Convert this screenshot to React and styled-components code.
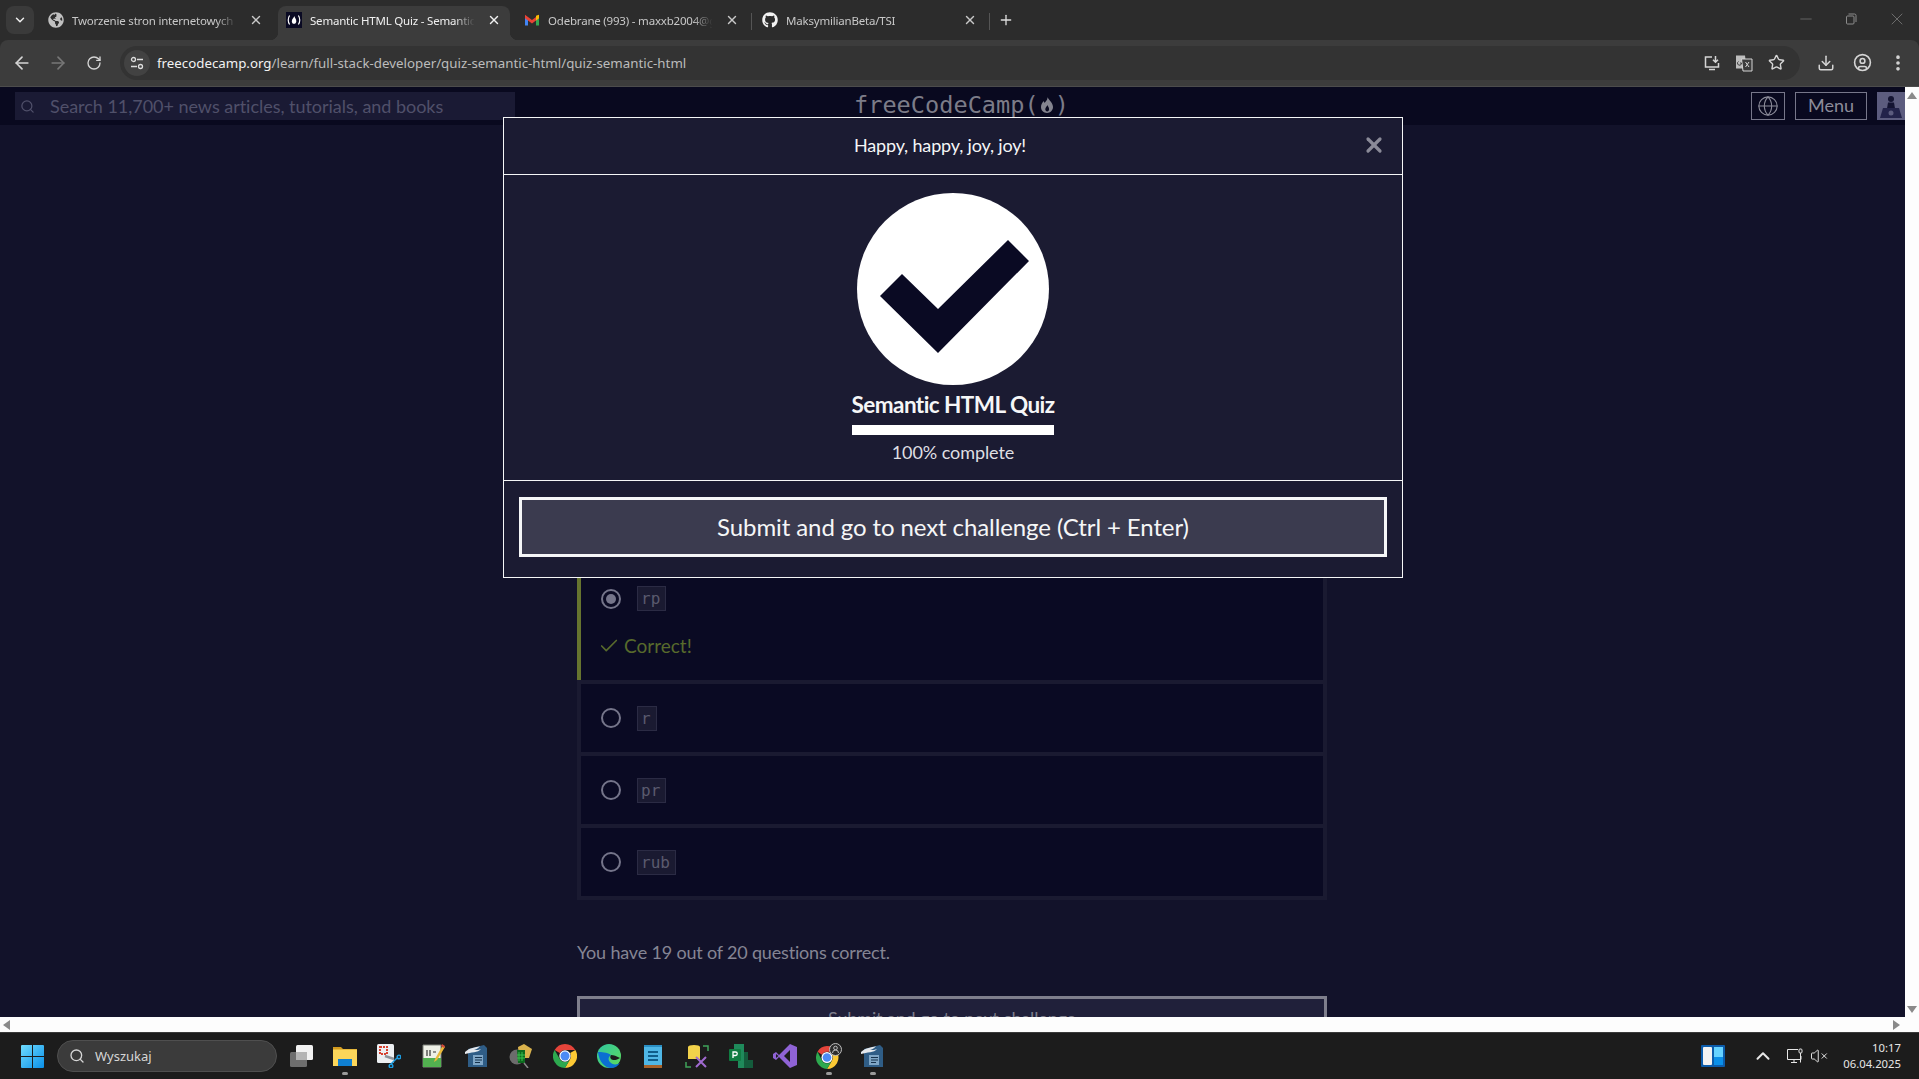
import React from "react";
import styled, { createGlobalStyle } from "styled-components";
import { ArrowLeft, ArrowRight, RotateCw, ChevronDown, X, Plus, Minus, Star, Download, MoreVertical, Search, Globe, Check, ChevronUp, VolumeX, CircleUser } from "lucide-react";
import { FaGithub, FaGlobeAmericas } from "react-icons/fa";

const GlobalStyle = createGlobalStyle`
	html, body {
		margin: 0;
		height: 100%;
		overflow: hidden;
		background: #2c2c2c;
	}
	* { box-sizing: border-box; }
`;

const chromeFont = `"Noto Sans", "Open Sans", sans-serif`;
const pageFont = `Lato, "Open Sans", sans-serif`;
const monoFont = `"DejaVu Sans Mono", "Liberation Mono", monospace`;

const Screen = styled.div`
	height: 100vh;
	display: flex;
	flex-direction: column;
	background: #2c2c2c;
	font-family: ${chromeFont};
`;

/* browser tabs */
const TabStrip = styled.div`
	height: 40px;
	flex: none;
	display: flex;
	align-items: flex-end;
	padding-left: 6px;
	gap: 6px;
	color: #d8d8d8;
`;

const TabMenu = styled.div`
	width: 28px;
	height: 28px;
	align-self: flex-start;
	margin-top: 6px;
	border-radius: 8px;
	background: #3a3a3a;
	display: flex;
	align-items: center;
	justify-content: center;
	color: #eee;
`;

const Tab = styled.div`
	position: relative;
	width: 232px;
	height: 34px;
	padding: 0 8px 6px;
	display: flex;
	align-items: center;
	gap: 8px;
	font-size: 11.5px;
	letter-spacing: -0.2px;
	border-radius: 8px 8px 0 0;
	background: ${(p) => (p.$active ? "#3c3c3c" : "transparent")};
	color: ${(p) => (p.$active ? "#f0f0f0" : "#c8c8c8")};

	&::after {
		content: "";
		display: ${(p) => (p.$sep ? "block" : "none")};
		position: absolute;
		right: -4px;
		top: 7px;
		width: 1px;
		height: 17px;
		background: #555;
	}
`;

const Flare = styled.span`
	position: absolute;
	bottom: 0;
	width: 8px;
	height: 8px;
	${(p) => (p.$side === "left" ? "left: -8px;" : "right: -8px;")}
	background: radial-gradient(circle at ${(p) => (p.$side === "left" ? "0 0" : "100% 0")}, transparent 8px, #3c3c3c 8.5px);
`;

const TabTitle = styled.span`
	flex: 1;
	min-width: 0;
	white-space: nowrap;
	overflow: hidden;
	-webkit-mask-image: linear-gradient(to right, #000 86%, transparent 98%);
	mask-image: linear-gradient(to right, #000 86%, transparent 98%);
`;

const TabClose = styled.span`
	width: 16px;
	height: 16px;
	flex: none;
	display: flex;
	align-items: center;
	justify-content: center;
`;

const NewTab = styled.div`
	width: 16px;
	height: 34px;
	padding-bottom: 6px;
	margin-left: 6px;
	display: flex;
	align-items: center;
	justify-content: center;
	color: #ddd;
`;

const WindowControls = styled.div`
	margin-left: auto;
	align-self: flex-start;
	height: 38px;
	padding-right: 12px;
	display: flex;
	align-items: center;
	gap: 30px;
	color: #8c8c8c;
`;

/* address bar */
const Toolbar = styled.div`
	height: 47px;
	flex: none;
	display: flex;
	align-items: center;
	padding: 0 3px 1px 4px;
	background: #3c3c3c;
	border-radius: 8px 8px 0 0;
	border-bottom: 1px solid #4c4c4c;
`;

const ToolButton = styled.div`
	width: ${(p) => p.$size || 36}px;
	height: 34px;
	flex: none;
	display: flex;
	align-items: center;
	justify-content: center;
	color: ${(p) => (p.$dim ? "#777" : "#d5d5d5")};
`;

const AddressPill = styled.div`
	flex: 1;
	height: 34px;
	margin: 0 8px;
	padding: 0 8px 0 4px;
	border-radius: 17px;
	background: #333;
	display: flex;
	align-items: center;
`;

const SiteInfo = styled.div`
	width: 26px;
	height: 26px;
	border-radius: 50%;
	background: #424242;
	display: flex;
	align-items: center;
	justify-content: center;
	color: #ddd;
`;

const Url = styled.div`
	flex: 1;
	margin-left: 7px;
	font-size: 13.3px;
	color: #bcbcbc;
	white-space: nowrap;
	span {
		color: #f2f2f2;
	}
`;

/* page under the dialog */
const Viewport = styled.div`
	flex: 1;
	min-height: 0;
	display: flex;
`;

const PageColumn = styled.div`
	flex: 1;
	min-width: 0;
	display: flex;
	flex-direction: column;
`;

const Page = styled.div`
	position: relative;
	flex: 1;
	min-height: 0;
	overflow: hidden;
	background: #12122a;
	font-family: ${pageFont};
`;

const Nav = styled.div`
	height: 38px;
	padding-top: 5px;
	display: flex;
	align-items: flex-start;
	background: #09091f;
`;

const SearchBox = styled.div`
	width: 500px;
	height: 28px;
	margin-left: 15px;
	padding-left: 5px;
	display: flex;
	align-items: center;
	gap: 15px;
	background: #1a1a34;
	color: #50506a;
	font-size: 18px;
	letter-spacing: -0.03px;
	white-space: nowrap;
`;

const Logo = styled.div`
	margin-left: 339px;
	display: flex;
	align-items: center;
	height: 26px;
	font-family: ${monoFont};
	font-size: 23.6px;
	color: #7c7c88;
	white-space: nowrap;
`;

const LogoFlame = styled.span`
	display: flex;
	margin: 0 -1px;
`;

const NavRight = styled.div`
	margin-left: auto;
	display: flex;
	gap: 10px;
`;

const NavButton = styled.div`
	height: 28px;
	width: ${(p) => p.$width}px;
	padding-bottom: ${(p) => (p.$text ? 2 : 0)}px;
	border: 1px solid #77778a;
	display: flex;
	align-items: center;
	justify-content: center;
	color: #8c8c9a;
	font-size: 18px;
`;

const Avatar = styled.div`
	width: 28px;
	height: 28px;
	background: #5c5c7e;
`;

const Quiz = styled.div`
	padding: 438px 1px 0 0;
	display: flex;
	flex-direction: column;
	align-items: center;
`;

const Answers = styled.div`
	width: 750px;
	padding: 4px;
	display: flex;
	flex-direction: column;
	gap: 4px;
	background: #1a1a31;
`;

const Answer = styled.div`
	background: #0a0a23;
	padding: ${(p) => (p.$correct ? "19px 20px 0 20px" : "0 20px")};
	height: ${(p) => (p.$correct ? 113 : 68)}px;
	${(p) => p.$correct && "border-left: 4px solid #66742f; margin-left: -4px;"}
`;

const AnswerLine = styled.div`
	height: ${(p) => (p.$correct ? 25 : 68)}px;
	display: flex;
	align-items: center;
	gap: 16px;
`;

const Radio = styled.span`
	width: 20px;
	height: 20px;
	border-radius: 50%;
	border: 2px solid #75758a;
	display: flex;
	align-items: center;
	justify-content: center;

	&::before {
		content: "";
		display: ${(p) => (p.$on ? "block" : "none")};
		width: 10px;
		height: 10px;
		border-radius: 50%;
		background: #75758a;
	}
`;

const Code = styled.code`
	height: 25px;
	padding: 0 5px 0 3px;
	border: 1px solid #2b2b44;
	background: #1a1a31;
	color: #5a5a6e;
	font-family: ${monoFont};
	font-size: 16px;
	line-height: 23px;
`;

const Verdict = styled.div`
	margin-top: 21px;
	margin-left: -3px;
	display: flex;
	align-items: center;
	gap: 4px;
	font-size: 19px;
	line-height: 27px;
	color: #586a2c;
`;

const Score = styled.p`
	width: 750px;
	margin: 39px 0 30px;
	font-size: 18px;
	letter-spacing: -0.18px;
	line-height: 27px;
	color: #858594;
`;

const DimSubmit = styled.div`
	width: 750px;
	height: 60px;
	padding-top: 6px;
	text-align: center;
	border: 3px solid #7e7e8c;
	background: #20203a;
	color: #7e7e8c;
	font-size: 18px;
	letter-spacing: -0.15px;
	line-height: 27px;
`;

/* success dialog */
const Dialog = styled.div`
	position: absolute;
	top: 30px;
	left: calc(50% - 449.5px);
	width: 900px;
	border: 1px solid #f5f6f7;
	background: #1b1b32;
	color: #f5f6f7;
`;

const DialogHeader = styled.div`
	height: 57px;
	padding: 0 16px 2px 0;
	display: flex;
	align-items: center;
	border-bottom: 1px solid #f5f6f7;
`;

const DialogTitle = styled.div`
	flex: 1;
	text-align: center;
	font-size: 18px;
	letter-spacing: -0.16px;
`;

const DialogClose = styled.span`
	width: 24px;
	margin-left: -14px;
	display: flex;
	color: #8a8a98;
`;

const DialogBody = styled.div`
	height: 306px;
	padding-top: 18px;
	display: flex;
	flex-direction: column;
	align-items: center;
	border-bottom: 1px solid #f5f6f7;
`;

const Badge = styled.svg`
	width: 192px;
	height: 192px;
	flex: none;
`;

const Progress = styled.div`
	display: inline-flex;
	flex-direction: column;
	align-items: stretch;
	text-align: center;
`;

const QuizName = styled.div`
	margin-top: 5px;
	font-size: 22.5px;
	letter-spacing: -0.55px;
	font-weight: 700;
	line-height: 29px;
`;

const Bar = styled.div`
	height: 10px;
	margin-top: 6px;
	background: #fff;
`;

const Percent = styled.div`
	margin-top: 4px;
	font-size: 18px;
	letter-spacing: -0.07px;
	line-height: 27px;
	color: #dfdfe2;
`;

const DialogFooter = styled.div`
	padding: 16px 15px 20px;
`;

const NextButton = styled.div`
	height: 60px;
	padding-bottom: 2px;
	border: 3px solid #f5f6f7;
	background: #3b3b4f;
	display: flex;
	align-items: center;
	justify-content: center;
	font-size: 24px;
	letter-spacing: -0.1px;
`;

/* scrollbars */
const VScroll = styled.div`
	width: 14px;
	flex: none;
	background: #fdfdfd;
	display: flex;
	flex-direction: column;
	justify-content: space-between;
	align-items: center;
	padding: 5px 0 19px;
`;

const HScroll = styled.div`
	height: 15px;
	flex: none;
	background: #fdfdfd;
	display: flex;
	align-items: center;
	justify-content: space-between;
	padding: 0 5px 0 3px;
`;

const Arrow = styled.span`
	width: 0;
	height: 0;
	border-style: solid;
	border-color: transparent;
	${(p) => p.$dir === "up" && "border-width: 0 5px 7px; border-bottom-color: #8a8a8a;"}
	${(p) => p.$dir === "down" && "border-width: 7px 5px 0; border-top-color: #8a8a8a;"}
	${(p) => p.$dir === "left" && "border-width: 5px 7px 5px 0; border-right-color: #8a8a8a;"}
	${(p) => p.$dir === "right" && "border-width: 5px 0 5px 7px; border-left-color: #8a8a8a;"}
`;

/* windows taskbar */
const Taskbar = styled.div`
	height: 47px;
	flex: none;
	display: flex;
	align-items: center;
	padding: 0 18px 0 21px;
	background: #1c1c1c;
	border-top: 1px solid #3a3a3a;
`;

const TaskSearch = styled.div`
	width: 220px;
	height: 32px;
	margin: 0 2px 0 13px;
	padding-left: 11px;
	display: flex;
	align-items: center;
	gap: 10px;
	border-radius: 16px;
	border: 1px solid #4f4f4f;
	background: #3b3b3b;
	color: #d6d6d6;
	font-size: 13px;
`;

const TaskApps = styled.div`
	display: flex;
`;

const TaskApp = styled.div`
	position: relative;
	width: 44px;
	height: 46px;
	display: flex;
	align-items: center;
	justify-content: center;

	&::after {
		content: "";
		display: ${(p) => (p.$running ? "block" : "none")};
		position: absolute;
		bottom: 4px;
		left: 19px;
		width: 6px;
		height: 3px;
		border-radius: 2px;
		background: #9a9a9a;
	}
`;

const Tray = styled.div`
	margin-left: auto;
	display: flex;
	align-items: center;
	color: #e6e6e6;
`;

const TrayItem = styled.div`
	display: flex;
	margin-left: ${(p) => p.$gap}px;
`;

const Clock = styled.div`
	margin-left: 15px;
	padding-bottom: 1px;
	text-align: right;
	font-size: 11.3px;
	line-height: 16px;
	color: #e6e6e6;
`;

const Flame = ({ size = 14, color = "#84848f", hole = "#09091f" }) => (
	<svg width={size} height={size} viewBox="0 0 24 24">
		<path d="M12.5 1.500c.6 3.400-1.900 4.900-3.500 7.400-.9-.2-1.200-1.200-1.200-2.200C5.500 9 4 11.800 4 14.600 4 19.200 7.600 22.500 12 22.500s8-3.200 8-7.800c0-5-4.300-8.700-7.500-13.200z" fill={color} />
		<path d="M12.300 12c.2 1.800-2.600 3-2.600 5.600 0 1.600 1.100 2.900 2.500 2.900s2.600-1.300 2.600-3c0-2.100-1.400-3.600-2.500-5.500z" fill={hole} />
	</svg>
);

const FccFavicon = () => (
	<svg width="16" height="16" viewBox="0 0 16 16">
		<rect width="16" height="16" fill="#0a0a23" />
		<path d="M3.600 3.500C1.800 6 1.800 10 3.600 12.500M12.400 3.500c1.800 2.500 1.800 6.500 0 9" stroke="#fff" strokeWidth="1.200" fill="none" />
		<path d="M8.200 4c.2 1.400-2.400 2.800-2.400 5.200 0 1.600 1 2.600 2.200 2.600s2.300-1 2.300-2.600C10.300 7.200 8.800 6 8.200 4z" fill="#fff" />
	</svg>
);

const GmailIcon = () => (
	<svg width="16" height="16" viewBox="0 0 16 16">
		<path d="M1 4v9.500h3V7z" fill="#4285f4" />
		<path d="M12 7v6.500h3V4z" fill="#34a853" />
		<path d="M1 2.800 8 8l7-5.200v3.400L8 11.600 1 6.200z" fill="#ea4335" />
		<path d="M12 3.800l3-1v3.400l-3 2.300z" fill="#fbbc04" />
	</svg>
);

const TuneIcon = () => (
	<svg width="16" height="16" viewBox="0 0 16 16" fill="none" stroke="currentColor" strokeWidth="1.300">
		<circle cx="4.500" cy="4.500" r="2" />
		<path d="M8 4.500h6M2 11.500h6" />
		<circle cx="11.500" cy="11.500" r="2" />
	</svg>
);

const InstallIcon = () => (
	<svg width="18" height="18" viewBox="0 0 18 18" fill="none" stroke="#d5d5d5" strokeWidth="1.500">
		<path d="M9 3H2.500v10h13v-4M6 15.500h6" />
		<path d="M12.500 2v6M10 5.800l2.500 2.500L15 5.800" />
	</svg>
);

const TranslateIcon = () => (
	<svg width="18" height="18" viewBox="0 0 18 18">
		<path d="M1 1.500h9l1.500 13H1z" fill="#bdbdbd" />
		<path d="M6.500 5h10.500v12H8z" fill="#3c3c3c" stroke="#d5d5d5" strokeWidth="1" />
		<path d="M3.500 7.500a2 2 0 1 0 3 1.500H5" stroke="#3c3c3c" strokeWidth="1" fill="none" />
		<path d="M10.500 8l3.500 5M14 8l-3.500 5" stroke="#d5d5d5" strokeWidth="1" fill="none" />
	</svg>
);

const RestoreIcon = () => (
	<svg width="12" height="12" viewBox="0 0 12 12" fill="none" stroke="currentColor">
		<rect x="1.500" y="3" width="7.500" height="8" rx="1" />
		<path d="M3.500 1h6a1.500 1.500 0 0 1 1.500 1.500V9" />
	</svg>
);

const CheckBadge = () => (
	<Badge viewBox="0 0 192 192">
		<circle cx="96" cy="96" r="96" fill="#fff" />
		<polygon points="23,103 45,81 81,116 151,47 172,68 81,160" fill="#0a0a23" />
	</Badge>
);

const UserFigure = () => (
	<svg width="28" height="28" viewBox="0 0 28 28">
		<circle cx="14" cy="7" r="3" fill="#141432" />
		<path d="M11 10.500h6l1 6h-8z" fill="#141432" />
		<path d="M6 16h16l3 10H3z" fill="#23234a" />
		<circle cx="14" cy="21" r="2.500" fill="#5c5c7e" />
	</svg>
);

const WinLogo = () => (
	<svg width="23" height="23" viewBox="0 0 23 23">
		<defs>
			<linearGradient id="win" x1="0" y1="0" x2="1" y2="1">
				<stop offset="0" stopColor="#6fdcff" />
				<stop offset="1" stopColor="#0a8fe8" />
			</linearGradient>
		</defs>
		<path d="M0 1a1 1 0 0 1 1-1h10v11H0zM12 0h10a1 1 0 0 1 1 1v10H12zM0 12h11v11H1a1 1 0 0 1-1-1zM12 12h11v10a1 1 0 0 1-1 1H12z" fill="url(#win)" />
	</svg>
);

const TaskViewIcon = () => (
	<svg width="24" height="24" viewBox="0 0 24 24">
		<rect x="1" y="8" width="17" height="15" rx="1.500" fill="#6e6e6e" />
		<rect x="7" y="1" width="17" height="15" rx="1.500" fill="#f2f2f2" />
		<rect x="7" y="8" width="11" height="8" fill="#b4b4b4" />
	</svg>
);

const FolderIcon = () => (
	<svg width="24" height="24" viewBox="0 0 24 24">
		<path d="M0 3h8l2 2h14v4H0z" fill="#d29a1e" />
		<path d="M0 5.500h24V22H0z" fill="#fbd65a" />
		<path d="M5 15h14v7H5z" fill="#0f7fd1" />
	</svg>
);

const SnipIcon = () => (
	<svg width="24" height="24" viewBox="0 0 24 24">
		<rect x="0" y="0" width="17" height="19" rx="1.500" fill="#eceff2" />
		<rect x="3" y="3" width="7" height="7" fill="none" stroke="#d8412f" strokeWidth="2" strokeDasharray="2 1" />
		<path d="M8 12l9 3" stroke="#8c9299" strokeWidth="2.500" />
		<circle cx="22" cy="13" r="1.800" fill="none" stroke="#1a9be0" strokeWidth="1.500" />
		<circle cx="14" cy="22" r="1.800" fill="none" stroke="#1a9be0" strokeWidth="1.500" />
		<path d="M20 14l-6 6" stroke="#1a9be0" strokeWidth="1.500" />
	</svg>
);

const NotesIcon = () => (
	<svg width="24" height="24" viewBox="0 0 24 24">
		<path d="M2 1h18v22H2z" fill="#eef0e6" stroke="#7c8078" />
		<path d="M2 14h18v9H2z" fill="#52b050" />
		<path d="M6 6v6M9 6v6M12 8h3" stroke="#333" strokeWidth="1.200" />
		<path d="M22 1l-8 14-1 3 3-2 8-13z" fill="#e9b93a" />
		<path d="M21 0l3 2-1 2-3-2z" fill="#d1483a" />
	</svg>
);

const DocIcon = () => (
	<svg width="24" height="24" viewBox="0 0 24 24">
		<path d="M3 5l16-4 3 3v19H3z" fill="#2f5d86" />
		<path d="M8 11h10v10H8z" fill="#7fa6c6" />
		<path d="M10 13.500h7M10 16h7M10 18.500h5" stroke="#16324c" strokeWidth="1" />
		<path d="M0 8c5-5 10-4 15-6-2 3-4 3-6 4 3 0 5 0 7-1-3 4-10 3-16 5z" fill="#e4e8ec" />
	</svg>
);

const MailScanIcon = () => (
	<svg width="24" height="24" viewBox="0 0 24 24">
		<path d="M9 3l6-3 8 5-3 9H10z" fill="#d9b24c" />
		<circle cx="8" cy="13" r="7.500" fill="#6c6c6c" />
		<path d="M8 6h8v13H9z" fill="#0c6a1e" />
		<path d="M10 8v9M13 8v9M8 11h8M8 14h8" stroke="#39c14d" strokeWidth="1" />
		<path d="M15 19l4 5" stroke="#8a8a8a" strokeWidth="1.500" />
	</svg>
);

const ChromeIcon = ({ size = 24 }) => (
	<svg width={size} height={size} viewBox="0 0 24 24">
		<path d="M12 0a12 12 0 0 1 10.400 6H12a6 6 0 0 0-5.200 3L1.600 6A12 12 0 0 1 12 0z" fill="#e5443a" />
		<path d="M22.400 6A12 12 0 0 1 12 24l5.200-9a6 6 0 0 0 0-6z" fill="#fcc934" />
		<path d="M1.600 6A12 12 0 0 0 12 24l5.200-9a6 6 0 0 1-10.400 0z" fill="#2da94f" />
		<circle cx="12" cy="12" r="5.700" fill="#fff" />
		<circle cx="12" cy="12" r="4.500" fill="#4c8bf5" />
	</svg>
);

const EdgeIcon = () => (
	<svg width="24" height="24" viewBox="0 0 24 24">
		<defs>
			<linearGradient id="edgeA" x1="0" y1="0" x2="1" y2="1">
				<stop offset="0" stopColor="#2fc6a0" />
				<stop offset="1" stopColor="#5fdc5a" />
			</linearGradient>
		</defs>
		<circle cx="12" cy="12" r="12" fill="url(#edgeA)" />
		<path d="M1 8C2 18 8 24 14 24c4 0 7-2 9-5-3 2-8 2-10-1-2-2-2-5 1-7-4-3-10-3-13-3z" fill="#0b6fd1" />
		<path d="M14 11c3 0 5 1 9 3-3 2-7 3-9 1-1-1-1-3 0-4z" fill="#1c1c1c" />
	</svg>
);

const NotepadIcon = () => (
	<svg width="24" height="24" viewBox="0 0 24 24">
		<rect x="3" y="1" width="18" height="23" rx="1" fill="#4fb7e6" />
		<rect x="3" y="21" width="18" height="3" fill="#a6622a" />
		<path d="M3 1h18v2H3z" fill="#2a8fc4" />
		<path d="M7 8h10M7 12h10M7 16h10" stroke="#0f5d8a" strokeWidth="1.800" />
	</svg>
);

const DbToolIcon = () => (
	<svg width="24" height="24" viewBox="0 0 24 24">
		<path d="M3 3a6 2 0 0 1 12 0v12H3z" fill="#f2d24a" />
		<path d="M18 2h5v5M1 18v5h5" stroke="#3fa35a" strokeWidth="1.500" fill="none" />
		<path d="M11 13l10 10M21 13L11 23" stroke="#a06ad0" strokeWidth="2" />
	</svg>
);

const ProjectIcon = () => (
	<svg width="24" height="24" viewBox="0 0 24 24">
		<path d="M5 0h10v8h4v8h5v8H9v-8H5z" fill="#1f8a5b" />
		<path d="M15 8h4v8h5v8H15z" fill="#145c3c" />
		<rect x="0" y="5" width="12" height="12" rx="1" fill="#107c41" />
		<path d="M4 14V8h2.500a1.700 1.700 0 0 1 0 3.500H4" stroke="#fff" strokeWidth="1.300" fill="none" />
	</svg>
);

const StudioIcon = () => (
	<svg width="24" height="24" viewBox="0 0 24 24">
		<path d="M17 0l7 3v18l-7 3L6 13l-3 3-3-2V10l3-2 3 3z" fill="#8f63d6" />
		<path d="M17 6l-6 6 6 6z" fill="#1c1c1c" />
		<path d="M3 10l2.500 2L3 14z" fill="#1c1c1c" />
	</svg>
);

const ProfileChrome = () => (
	<svg width="26" height="26" viewBox="0 0 26 26">
		<g transform="translate(0 3)">
			<path d="M11 0a11.500 11.500 0 0 1 10 5.800H11a5.700 5.700 0 0 0-5 2.900L1.500 5.800A11.500 11.500 0 0 1 11 0z" fill="#e5443a" />
			<path d="M21 5.800A11.500 11.500 0 0 1 11 23l5-8.600a5.700 5.700 0 0 0 0-5.700z" fill="#fcc934" />
			<path d="M1.500 5.800A11.500 11.500 0 0 0 11 23l5-8.600a5.700 5.700 0 0 1-10 0z" fill="#2da94f" />
			<circle cx="11" cy="11.500" r="5.500" fill="#fff" />
			<circle cx="11" cy="11.500" r="4.300" fill="#4c8bf5" />
		</g>
		<circle cx="19.500" cy="6.500" r="6" fill="#2c2c2c" stroke="#bdbdbd" />
		<circle cx="19.500" cy="5" r="1.800" fill="none" stroke="#bdbdbd" />
		<path d="M16.500 10a3 3 0 0 1 6 0" fill="none" stroke="#bdbdbd" />
	</svg>
);

const WidgetsIcon = () => (
	<svg width="24" height="22" viewBox="0 0 24 22">
		<rect width="24" height="22" rx="1" fill="#0c5cab" />
		<rect x="2" y="2" width="9" height="18" rx="1" fill="#f2f2f2" />
		<rect x="13" y="2" width="9" height="10" fill="#66d3ff" />
		<rect x="13" y="12" width="9" height="8" fill="#0a8fe8" />
	</svg>
);

const NetworkIcon = () => (
	<svg width="16" height="16" viewBox="0 0 16 16" fill="none" stroke="currentColor">
		<path d="M11 1.500H.500V11.500H14V8M4 14.500h6M7 12v2" />
		<rect x="12" y="1" width="3" height="4" rx="1" />
		<path d="M13.500 5v9.500" />
	</svg>
);

const taskApps = [
	{ id: "view", icon: <TaskViewIcon /> },
	{ id: "files", icon: <FolderIcon />, running: true },
	{ id: "snip", icon: <SnipIcon /> },
	{ id: "notes", icon: <NotesIcon /> },
	{ id: "doc", icon: <DocIcon /> },
	{ id: "mail", icon: <MailScanIcon /> },
	{ id: "chrome", icon: <ChromeIcon /> },
	{ id: "edge", icon: <EdgeIcon /> },
	{ id: "notepad", icon: <NotepadIcon /> },
	{ id: "db", icon: <DbToolIcon /> },
	{ id: "project", icon: <ProjectIcon /> },
	{ id: "studio", icon: <StudioIcon /> },
	{ id: "chrome2", icon: <ProfileChrome />, running: true },
	{ id: "doc2", icon: <DocIcon />, running: true },
];

const tabs = [
	{ title: "Tworzenie stron internetowych - ", icon: <FaGlobeAmericas size={16} color="#c0c0c0" /> },
	{ title: "Semantic HTML Quiz - Semantic HTML", icon: <FccFavicon />, active: true },
	{ title: "Odebrane (993) - maxxb2004@gmail.com", icon: <GmailIcon />, sep: true },
	{ title: "MaksymilianBeta/TSI", icon: <FaGithub size={16} color="#f2f2f2" />, sep: true },
];

const answers = ["r", "pr", "rub"];

function App() {
	return (
		<Screen>
			<GlobalStyle />
			<TabStrip>
				<TabMenu>
					<ChevronDown size={14} strokeWidth={2.5} />
				</TabMenu>
				{tabs.map((t) => (
					<Tab key={t.title} $active={t.active} $sep={t.sep}>
						{t.active && <Flare $side="left" />}
						{t.active && <Flare $side="right" />}
						{t.icon}
						<TabTitle>{t.title}</TabTitle>
						<TabClose>
							<X size={14} strokeWidth={2.4} />
						</TabClose>
					</Tab>
				))}
				<NewTab>
					<Plus size={16} strokeWidth={2} />
				</NewTab>
				<WindowControls>
					<Minus size={18} strokeWidth={0.8} />
					<RestoreIcon />
					<X size={20} strokeWidth={0.8} />
				</WindowControls>
			</TabStrip>

			<Toolbar>
				<ToolButton>
					<ArrowLeft size={20} />
				</ToolButton>
				<ToolButton $dim>
					<ArrowRight size={20} />
				</ToolButton>
				<ToolButton>
					<RotateCw size={16} />
				</ToolButton>
				<AddressPill>
					<SiteInfo>
						<TuneIcon />
					</SiteInfo>
					<Url>
						<span>freecodecamp.org</span>/learn/full-stack-developer/quiz-semantic-html/quiz-semantic-html
					</Url>
					<ToolButton $size={32}>
						<InstallIcon />
					</ToolButton>
					<ToolButton $size={32}>
						<TranslateIcon />
					</ToolButton>
					<ToolButton $size={32}>
						<Star size={17} />
					</ToolButton>
				</AddressPill>
				<ToolButton>
					<Download size={18} />
				</ToolButton>
				<ToolButton>
					<CircleUser size={19} />
				</ToolButton>
				<ToolButton>
					<MoreVertical size={20} strokeWidth={2.4} />
				</ToolButton>
			</Toolbar>

			<Viewport>
				<PageColumn>
					<Page>
						<Nav>
							<SearchBox>
								<Search size={15} />
								Search 11,700+ news articles, tutorials, and books
							</SearchBox>
							<Logo>
								freeCodeCamp(
								<LogoFlame>
									<Flame size={18} />
								</LogoFlame>
								)
							</Logo>
							<NavRight>
								<NavButton $width={34}>
									<Globe size={22} strokeWidth={1.2} />
								</NavButton>
								<NavButton $width={72} $text>
									Menu
								</NavButton>
								<Avatar>
									<UserFigure />
								</Avatar>
							</NavRight>
						</Nav>

						<Quiz>
							<Answers>
								<Answer $correct>
									<AnswerLine $correct>
										<Radio $on />
										<Code>rp</Code>
									</AnswerLine>
									<Verdict>
										<Check size={22} strokeWidth={1.8} />
										Correct!
									</Verdict>
								</Answer>
								{answers.map((a) => (
									<Answer key={a}>
										<AnswerLine>
											<Radio />
											<Code>{a}</Code>
										</AnswerLine>
									</Answer>
								))}
							</Answers>
							<Score>You have 19 out of 20 questions correct.</Score>
							<DimSubmit>Submit and go to next challenge</DimSubmit>
						</Quiz>

						<Dialog>
							<DialogHeader>
								<DialogTitle>Happy, happy, joy, joy!</DialogTitle>
								<DialogClose>
									<X size={24} strokeWidth={3.2} />
								</DialogClose>
							</DialogHeader>
							<DialogBody>
								<CheckBadge />
								<Progress>
									<QuizName>Semantic HTML Quiz</QuizName>
									<Bar />
									<Percent>100% complete</Percent>
								</Progress>
							</DialogBody>
							<DialogFooter>
								<NextButton>Submit and go to next challenge (Ctrl + Enter)</NextButton>
							</DialogFooter>
						</Dialog>
					</Page>
					<HScroll>
						<Arrow $dir="left" />
						<Arrow $dir="right" />
					</HScroll>
				</PageColumn>
				<VScroll>
					<Arrow $dir="up" />
					<Arrow $dir="down" />
				</VScroll>
			</Viewport>

			<Taskbar>
				<WinLogo />
				<TaskSearch>
					<Search size={16} />
					Wyszukaj
				</TaskSearch>
				<TaskApps>
					{taskApps.map((a) => (
						<TaskApp key={a.id} $running={a.running}>
							{a.icon}
						</TaskApp>
					))}
				</TaskApps>
				<Tray>
					<WidgetsIcon />
					<TrayItem $gap={27}>
						<ChevronUp size={22} strokeWidth={2.2} />
					</TrayItem>
					<TrayItem $gap={13}>
						<NetworkIcon />
					</TrayItem>
					<TrayItem $gap={7}>
						<VolumeX size={18} strokeWidth={1.3} />
					</TrayItem>
					<Clock>
						10:17
						<br />
						06.04.2025
					</Clock>
				</Tray>
			</Taskbar>
		</Screen>
	);
}

export default App;
